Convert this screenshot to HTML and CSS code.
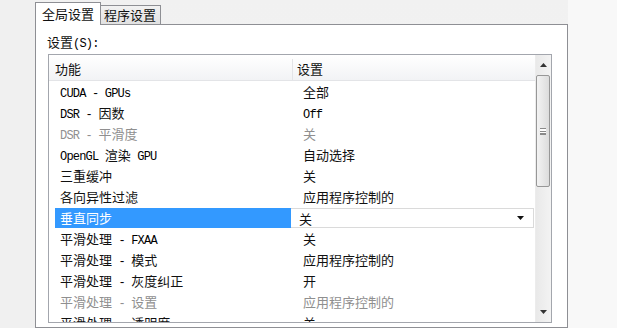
FILE: index.html
```html
<!DOCTYPE html>
<html lang="zh-CN">
<head>
  <meta charset="UTF-8" />
  <title>全局设置</title>
  <link rel="stylesheet" href="styles.css">
</head>
<body>
  <div class="screen">
    <div class="dialog">
      <div class="tabs">
        <div class="tab active">全局设置</div>
        <div class="tab">程序设置</div>
      </div>

      <div class="panel">
        <div class="label">设置<span class="en">(S):</span></div>

        <div class="list">
          <div class="grid">
            <div class="head">
              <div class="c1">功能</div>
              <div class="c2">设置</div>
            </div>

            <div class="row">
              <div class="c1"><span class="en">CUDA - GPUs</span></div>
              <div class="c2">全部</div>
            </div>
            <div class="row">
              <div class="c1"><span class="en">DSR - </span>因数</div>
              <div class="c2"><span class="en">Off</span></div>
            </div>
            <div class="row off">
              <div class="c1"><span class="en">DSR - </span>平滑度</div>
              <div class="c2">关</div>
            </div>
            <div class="row">
              <div class="c1"><span class="en">OpenGL </span>渲染<span class="en"> GPU</span></div>
              <div class="c2">自动选择</div>
            </div>
            <div class="row">
              <div class="c1">三重缓冲</div>
              <div class="c2">关</div>
            </div>
            <div class="row">
              <div class="c1">各向异性过滤</div>
              <div class="c2">应用程序控制的</div>
            </div>
            <div class="row selected">
              <div class="c1"><span class="sel">垂直同步</span></div>
              <div class="c2">
                <div class="combo">
                  <span>关</span>
                  <svg width="7" height="4" viewBox="0 0 7 4"><path d="M0 0H7L3.5 4Z" fill="#111"/></svg>
                </div>
              </div>
            </div>
            <div class="row">
              <div class="c1">平滑处理<span class="en"> - FXAA</span></div>
              <div class="c2">关</div>
            </div>
            <div class="row">
              <div class="c1">平滑处理<span class="en"> - </span>模式</div>
              <div class="c2">应用程序控制的</div>
            </div>
            <div class="row">
              <div class="c1">平滑处理<span class="en"> - </span>灰度纠正</div>
              <div class="c2">开</div>
            </div>
            <div class="row off">
              <div class="c1">平滑处理<span class="en"> - </span>设置</div>
              <div class="c2">应用程序控制的</div>
            </div>
            <div class="row">
              <div class="c1">平滑处理<span class="en"> - </span>透明度</div>
              <div class="c2">关</div>
            </div>
          </div>

          <div class="scrollbar">
            <div class="arrow">
              <svg width="7" height="4" viewBox="0 0 7 4"><path d="M0 4H7L3.5 0Z" fill="#333"/></svg>
            </div>
            <div class="thumb">
              <span class="grip"></span>
            </div>
            <div class="track"></div>
            <div class="arrow">
              <svg width="7" height="4" viewBox="0 0 7 4"><path d="M0 0H7L3.5 4Z" fill="#333"/></svg>
            </div>
          </div>
        </div>
      </div>
    </div>
    <div class="side"></div>
  </div>
</body>
</html>
```

FILE: styles.css
```css
* {
  box-sizing: border-box;
}

body {
  margin: 0;
  background: #f0f0f0;
  font-family: "Noto Sans CJK SC", sans-serif;
  font-size: 13px;
  color: #111;
}

.en {
  font-family: "Liberation Mono", monospace;
  font-size: 12px;
  letter-spacing: -0.8px;
  color: #000;
}

.off .en {
  color: inherit;
}

.screen {
  display: flex;
  height: 328px;
  overflow: hidden;
}

.dialog {
  width: 533px;
  margin-left: 35px;
  display: flex;
  flex-direction: column;
  background: linear-gradient(#f1f1f1, #f4f4f4);
}

.side {
  flex: 1;
  background: #f8f8f8;
}

/* tabs */
.tabs {
  display: flex;
  align-items: flex-end;
  height: 24px;
}

.tab {
  height: 19px;
  width: 60px;
  padding-left: 3px;
  line-height: 18px;
  border: 1px solid #8e8f94;
  border-bottom: none;
  border-left: none;
  background: linear-gradient(#f2f2f2, #e1e1e1);
}

.tab.active {
  position: relative;
  z-index: 1;
  height: 23px;
  width: 66px;
  padding-left: 6px;
  line-height: 22px;
  margin-bottom: -1px;
  border-left: 1px solid #8e8f94;
  background: #fff;
}

/* panel */
.panel {
  flex: 1;
  background: #fff;
  border: 1px solid #8e8f94;
  padding: 9px 0 0 12px;
}

.label {
  height: 16px;
  line-height: 16px;
  margin-left: -1px;
}

.list {
  display: flex;
  width: 504px;
  height: 269px;
  margin-top: 4px;
  border: 1px solid #a3a6ad;
}

.grid {
  width: 486px;
  overflow: hidden;
}

.head {
  display: flex;
  height: 26px;
  padding-top: 4px;
  line-height: 20px;
  border-bottom: 1px solid #e3e4e7;
  background: linear-gradient(#fff, #f2f3f5);
}

.head .c1 {
  width: 244px;
  padding-left: 6px;
  border-right: 1px solid #e3e4e7;
}

.head .c2 {
  padding-left: 4px;
}

.row {
  display: flex;
  height: 21px;
  line-height: 21px;
  white-space: nowrap;
}

.row .c1 {
  width: 244px;
  padding-left: 11px;
}

.row .c2 {
  flex: 1;
  padding-left: 10px;
}

.row.off {
  color: #8f8f8f;
}

.row.selected {
  padding-top: 1px;
}

.row.selected .c1 {
  padding-left: 6px;
}

.sel {
  display: block;
  width: 236px;
  height: 20px;
  line-height: 20px;
  padding-left: 5px;
  background: #3399ff;
  color: #fff;
}

.row.selected .c2 {
  padding-left: 0;
  margin-left: -2px;
}

.combo {
  display: flex;
  align-items: center;
  justify-content: space-between;
  width: 243px;
  height: 20px;
  padding: 0 9px 0 8px;
  border: 1px solid #dadada;
  border-left: none;
  background: #fff;
}

/* scrollbar */
.scrollbar {
  width: 16px;
  display: flex;
  flex-direction: column;
  background: linear-gradient(to right, #e9e9e9, #f3f3f3);
  border-left: 1px solid #ececec;
}

.arrow {
  height: 20px;
  display: flex;
  align-items: center;
  justify-content: center;
}

.thumb {
  height: 112px;
  margin: 0 1px 0 0;
  border: 1px solid #979797;
  border-radius: 2px;
  background: linear-gradient(to right, #f3f3f3, #dcdcdc);
  display: flex;
  align-items: center;
  justify-content: center;
}

.grip {
  width: 6px;
  height: 7px;
  border-top: 1px solid #8a8a8a;
  border-bottom: 1px solid #8a8a8a;
  background: linear-gradient(#fff 0 2px, #8a8a8a 2px 3px, #fff 3px 4px, #8a8a8a 4px 5px, transparent 5px);
}

.track {
  flex: 1;
}
```
